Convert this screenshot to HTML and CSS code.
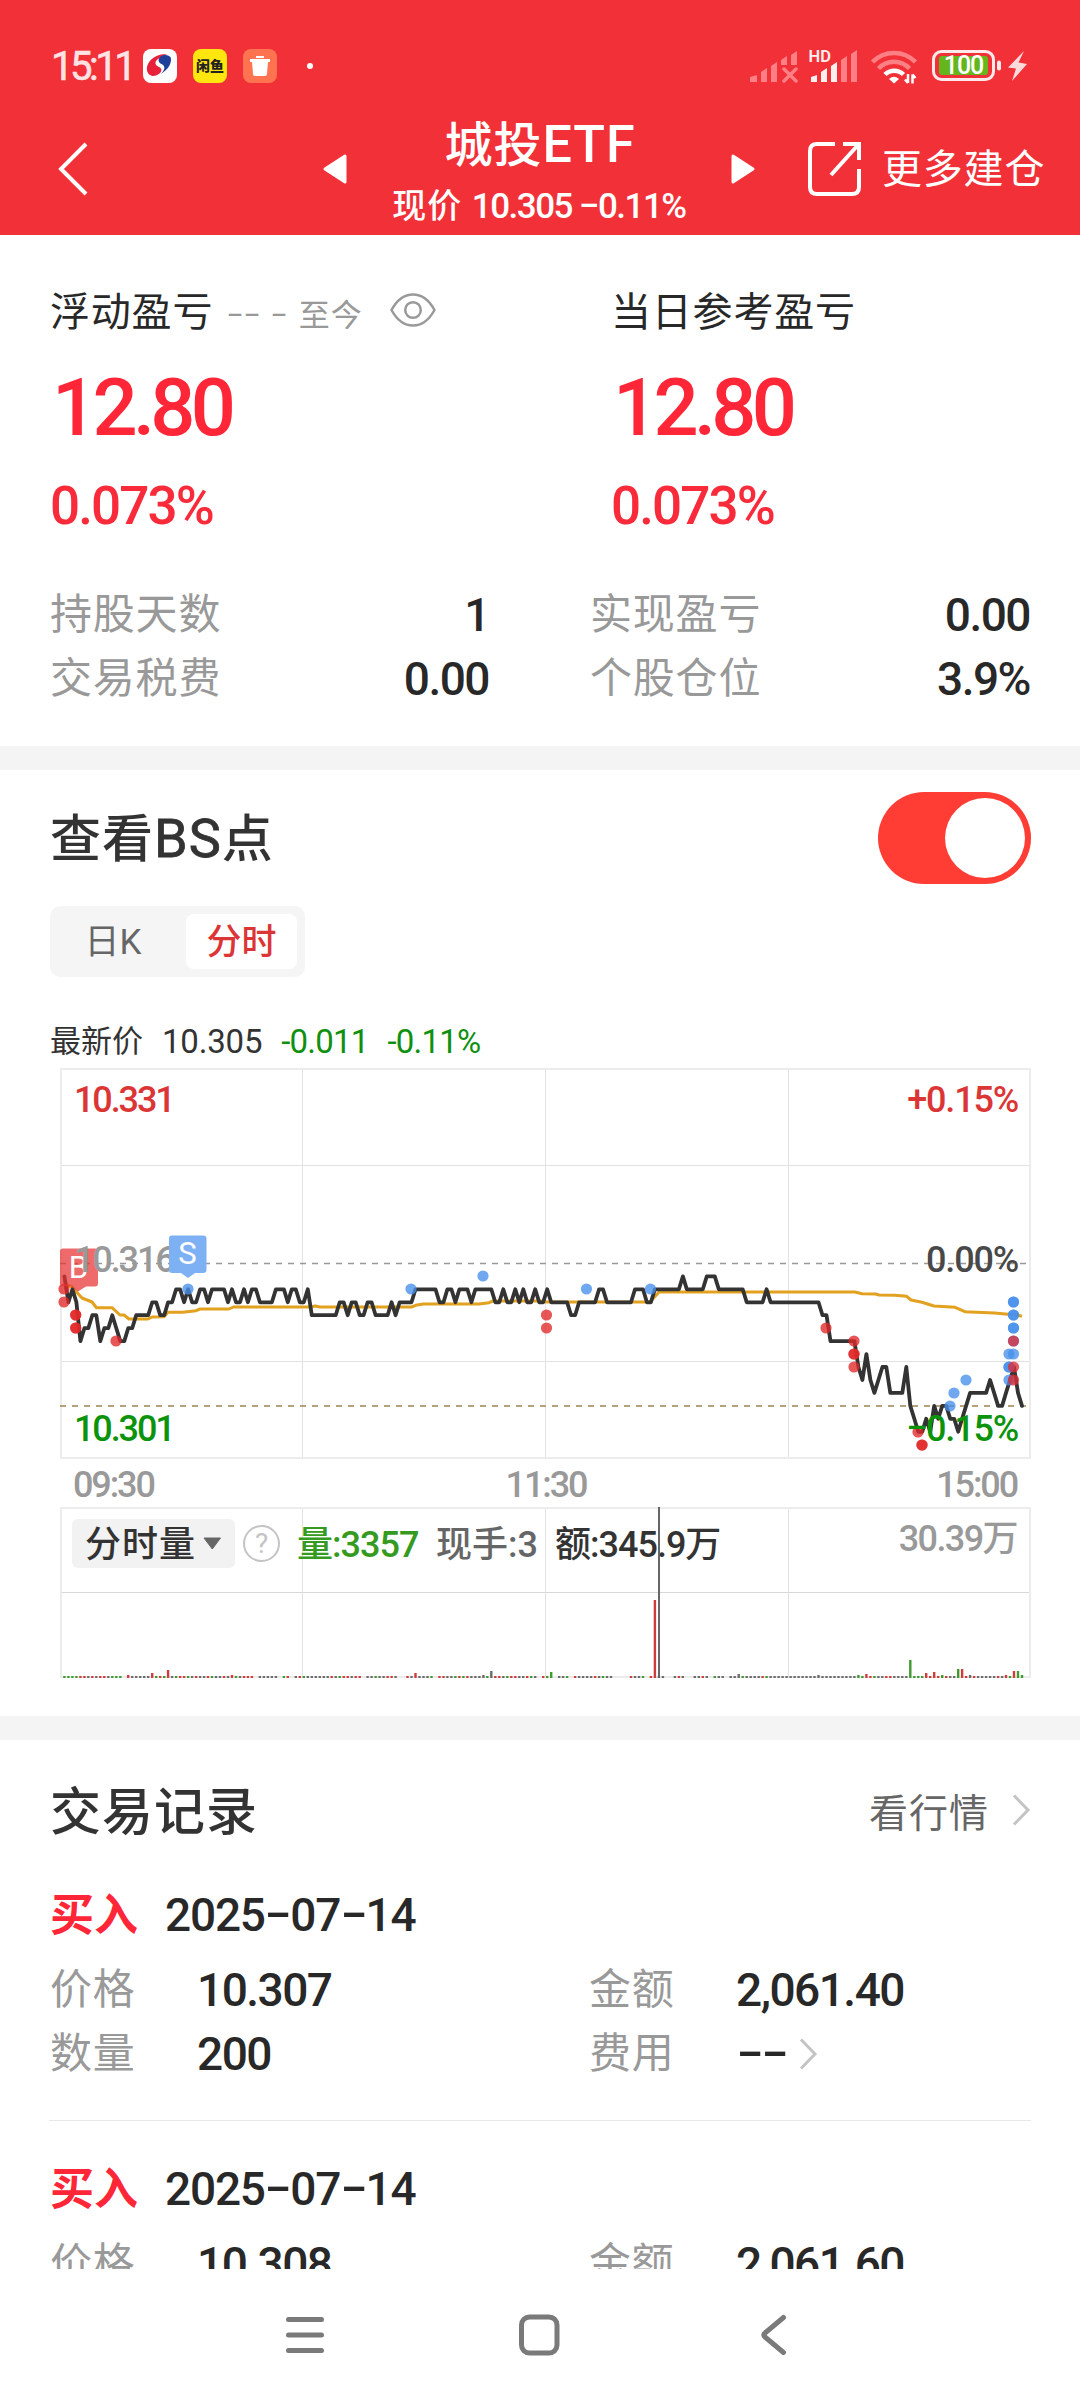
FILE: index.html
```html
<!DOCTYPE html>
<html lang="zh-CN">
<head>
<meta charset="utf-8">
<title>城投ETF</title>
<link rel="stylesheet" href="styles.css">
</head>
<body>
<div class="screen">
  <header class="header">
    <div class="status">
      <span class="clock">15:11</span>
      <svg class="app" width="34" height="34" viewBox="0 0 34 34"><rect width="34" height="34" rx="8" fill="#fff"/><path d="M24 5.500C14 4 3 12 4 21c.5 5 5 7 9 5.500 6-2 7-7 3-8.500-4-1.500-5-5-1-8 3-2.500 6-3.500 9-4.500z" fill="#e8203a"/><path d="M17 8c4-3 8-2 10.500 0 2 5-2 13-10 17 5-4 5-8 1-10-3-1.500-4-4-1.500-7z" fill="#1f3f98"/></svg>
      <svg class="app" width="34" height="34" viewBox="0 0 34 34"><rect width="34" height="34" rx="8" fill="#ffe60f"/><text x="17" y="22" class="fish" text-anchor="middle">闲鱼</text></svg>
      <svg class="app" width="34" height="34" viewBox="0 0 34 34"><rect width="34" height="34" rx="8" fill="#ff7350"/><path d="M7 10h20v3h-2l-1 12q0 2-2 2H12q-2 0-2-2L9 13H7zM13 7h8v2h-8z" fill="#fff"/></svg>
      <i class="dot"></i>
      <span class="grow"></span>
      <svg class="sig" width="48" height="34" viewBox="0 0 48 34" fill="#ff8084"><path d="M0 33v-5l7-2v7zM11 33V23l6-4v14zM21 33V17l6-4v20zM31 16v-5l6-4v9zM41 16V6l6-4v14z"/><path d="M34 20l12 12M46 20L34 32" stroke="#ff8084" stroke-width="3.500" stroke-linecap="round"/></svg>
      <svg class="sig2" width="52" height="34" viewBox="0 0 52 34"><g fill="#fff0f0"><path d="M3 33v-5l6-2v7zM13 33V23l6-4v14zM23 33V17l6-4v20z"/><text x="0.500" y="13" class="hd">HD</text></g><path d="M33 33V11l6-4v26zM43 33V5l6-4v32z" fill="#ff8084"/></svg>
      <svg class="wifi" width="46" height="35" viewBox="0 0 46 35" fill="none" stroke-width="4.500"><path d="M1.500 13a30 30 0 0 1 43 0M7.500 19.500a21 21 0 0 1 31 0" stroke="#ff8084"/><path d="M14 25.500a13 13 0 0 1 18.500 0" stroke="#fff"/><path d="M18 30q5-4.500 10 0l-5 4.500z" fill="#fff"/><path d="M37 25v9M34 30.500l3 3.500M41.500 34.500v-9M44.500 29l-3-3.500" stroke="#fff" stroke-width="2.500"/></svg>
      <svg class="bat" width="70" height="32" viewBox="0 0 70 32"><rect x="1.500" y="1.500" width="60" height="28" rx="8" fill="none" stroke="#ffe9ea" stroke-width="3"/><rect x="7" y="6" width="49" height="19" rx="3" fill="#65b61d"/><rect x="65" y="10.500" width="4" height="10" rx="2" fill="#ffe9ea"/><text x="31.500" y="24.300" text-anchor="middle" class="batnum">100</text></svg>
      <svg class="bolt" width="20" height="30" viewBox="0 0 20 30"><path d="M16 0L0 16.500l8 1L4 30l15-17-8.500-1.500z" fill="#ffdadb"/></svg>
    </div>
    <nav class="nav">
      <svg class="back" width="32" height="54" viewBox="0 0 32 54"><path d="M29 2L4 27l25 25" fill="none" stroke="#fff" stroke-width="4"/></svg>
      <div class="switcher">
        <svg width="24" height="30" viewBox="0 0 24 30"><path d="M22 2v26L2 15z" fill="#fff" stroke="#fff" stroke-width="3" stroke-linejoin="round"/></svg>
        <div class="titles">
          <h1>城投<span>ETF</span></h1>
          <p>现价 <b>10.305 <i class="dash">-</i>0.11%</b></p>
        </div>
        <svg width="24" height="30" viewBox="0 0 24 30"><path d="M2 2v26l20-13z" fill="#fff" stroke="#fff" stroke-width="3" stroke-linejoin="round"/></svg>
      </div>
      <div class="more">
        <svg width="54" height="54" viewBox="0 0 54 54" fill="none" stroke="#fff" stroke-width="4"><path d="M27 2H9Q2 2 2 9v36q0 7 7 7h35q7 0 7-7V27M35 2h16v16M50 3L23 33"/></svg>
        <span>更多建仓</span>
      </div>
    </nav>
  </header>

  <main class="body">
    <section class="summary">
      <div class="duo">
        <div>
          <div class="cap">浮动盈亏<small><i class="dash">-</i><i class="dash">-</i> <i class="dash">-</i> 至今</small>
            <svg width="46" height="34" viewBox="0 0 46 34" fill="none" stroke="#999" stroke-width="2.500"><path d="M1.500 17Q10 1.500 23 1.500T44.500 17Q36 32.500 23 32.500T1.500 17z"/><circle cx="23" cy="17" r="7.800"/></svg>
          </div>
          <div class="big">12.80</div>
          <div class="pct">0.073%</div>
        </div>
        <div>
          <div class="cap">当日参考盈亏</div>
          <div class="big">12.80</div>
          <div class="pct">0.073%</div>
        </div>
      </div>
      <dl class="stats">
        <div><dt>持股天数</dt><dd>1</dd></div>
        <div><dt>实现盈亏</dt><dd>0.00</dd></div>
        <div><dt>交易税费</dt><dd>0.00</dd></div>
        <div><dt>个股仓位</dt><dd>3.9%</dd></div>
      </dl>
    </section>

    <section class="bs">
      <div class="bar"><h2>查看<span>BS</span>点</h2><span class="toggle"><i></i></span></div>
      <div class="tabs"><span>日K</span><span class="on">分时</span></div>
      <div class="quote"><span>最新价</span><span>10.305</span><span class="down">-0.011</span><span class="down">-0.11%</span></div>
      <svg class="chart" width="1080" height="630" viewBox="0 1060 1080 630">
        <g fill="none" stroke="#e2e2e2" stroke-width="1">
          <path d="M302.500 1069v389M545.500 1069v389M788.500 1069v389M61 1165.500h969M61 1361.500h969M302.500 1508v170M545.500 1508v170M788.500 1508v170"/>
          <path d="M61 1592.500h969" stroke="#d8d8d8"/>
          <g stroke="#ececec" stroke-width="2"><rect x="61" y="1069" width="969" height="389"/><path d="M61 1678v-170h969v170M61 1677h969"/></g>
        </g>
        <g fill="none" stroke-dasharray="6 6">
          <path d="M60 1263.500h966" stroke="#999" stroke-width="1.500"/>
          <path d="M60 1406h966" stroke="#b5a27c" stroke-width="2"/>
        </g>
        <polyline class="avg" points="64.400,1284 72,1287 76.500,1292 82,1298 92,1302 96.500,1307.700 112,1307.700 120,1315 124,1315 129,1319 148,1319 152,1317 164,1316.700 168,1312.300 182.500,1312.300 196,1310.700 200,1309 229,1309 233.500,1307 311.600,1307 315,1306 320,1307 411.500,1307 415.600,1305.300 423.500,1304 478.700,1304 489,1302.700 493,1301 540,1301 547,1302 650,1302 659,1292 855,1292 862,1293.700 875.700,1294 879,1295 894.700,1295.300 906.700,1296.300 911,1300 922,1302.300 934,1306 955,1307.300 965,1311.700 994.500,1313 1008,1314.300 1017,1315 1022,1316.300"/>
        <polyline class="price" id="price"/>
        <g id="dots"></g>
        <path d="M63 1248.500h32q3 0 3 3v32q0 3-3 3h-9l-8 5-7-5h-8q-3 0-3-3v-32q0-3 3-3z" class="buy"/>
        <text x="78.500" y="1277.500" class="mark">B</text>
        <g class="axis">
          <g class="left">
            <text x="74" y="1112.300" fill="#dc3535">10.331</text>
            <text x="74" y="1272" fill="#999">10.316</text>
            <text x="74" y="1440.600" fill="#0b930b">10.301</text>
          </g>
          <g text-anchor="end">
            <text x="1018" y="1112.300" fill="#dc3535">+0.15%</text>
            <text x="1018" y="1272" fill="#484848">0.00%</text>
            <text x="1018" y="1440.600" fill="#0b930b">0.15%</text>
          </g>
          <text transform="translate(906.500 1438) scale(1.750 1)" fill="#0b930b">-</text>
          <g fill="#999" class="left">
            <text x="73" y="1497">09:30</text>
            <text x="546" y="1497" text-anchor="middle">11:30</text>
            <text x="1017" y="1497" text-anchor="end">15:00</text>
          </g>
        </g>
        <path d="M172 1235.500h31q3.500 0 3.500 3v31.500q0 3-3.500 3h-8l-7 5-7-5h-9q-3 0-3-3v-31.500q0-3 3-3z" class="sell"/>
        <text x="187.500" y="1264" class="mark">S</text>
        <g id="bars"></g>
        <rect x="72" y="1519" width="163" height="49" rx="6" fill="#f2f2f2"/>
        <g class="legend">
          <text x="85" y="1557" fill="#333" class="name">分时量</text>
          <path d="M204 1538h16.500l-8.200 11z" fill="#666" stroke="#666" stroke-linejoin="round"/>
          <circle cx="261.500" cy="1543.500" r="17.500" fill="none" stroke="#c4c4c4" stroke-width="2"/>
          <text x="261.500" y="1553" text-anchor="middle" class="q">?</text>
          <text x="297" y="1557" fill="#359a20">量:3357</text>
          <text x="436" y="1557" fill="#666" class="hand">现手:3</text>
          <text x="555" y="1557" fill="#333">额:345.9万</text>
          <text x="1017" y="1551" fill="#999" text-anchor="end" class="max">30.39万</text>
        </g>
        <path d="M659 1507v171" stroke="#666" stroke-width="2"/>
      </svg>
    </section>

    <section class="records">
      <div class="bar"><h2>交易记录</h2><a>看行情<svg width="20" height="32" viewBox="0 0 20 32"><path d="M3 1.500L17 16 3 30.500" fill="none" stroke="#c4c4c4" stroke-width="3"/></svg></a></div>
      <article>
        <h3><em>买入</em><time>2025<i class="dash">-</i>07<i class="dash">-</i>14</time></h3>
        <dl>
          <dt>价格</dt><dd>10.307</dd><dt>金额</dt><dd>2,061.40</dd>
          <dt>数量</dt><dd>200</dd><dt>费用</dt><dd><span class="none"><i class="dash">-</i><i class="dash">-</i></span><svg width="20" height="32" viewBox="0 0 20 32"><path d="M3 1.500L17 16 3 30.500" fill="none" stroke="#c4c4c4" stroke-width="3"/></svg></dd>
        </dl>
      </article>
      <article>
        <h3><em>买入</em><time>2025<i class="dash">-</i>07<i class="dash">-</i>14</time></h3>
        <dl><dt>价格</dt><dd>10.308</dd><dt>金额</dt><dd>2,061.60</dd></dl>
      </article>
    </section>
  </main>

  <footer class="keys">
    <svg width="1080" height="130" viewBox="0 2270 1080 130" fill="none" stroke="#7a7a7a" stroke-width="5" stroke-linecap="round"><path d="M288.500 2319.500h33M288.500 2335h33M288.500 2350.500h33"/><rect x="521.500" y="2317" width="35.500" height="36" rx="8"/><path d="M783.500 2317.500L765 2333q-2.500 2 0 4l18.500 15.500"/></svg>
  </footer>
</div>
<script src="chart.js"></script>
</body>
</html>
```
FILE: styles.css
```css
* { box-sizing: border-box; margin: 0; padding: 0; }
body { width: 1080px; background: #fff; font-family: Roboto, "Noto Sans CJK SC", sans-serif; color: #282828; }
svg { display: block; flex: none; }
i, em { font-style: normal; }
.screen { width: 1080px; height: 2400px; display: flex; flex-direction: column; overflow: hidden; }
.dash { display: inline-block; margin: 0 .12em; transform: translateY(-.05em) scaleX(1.7); }

.header { height: 235px; flex: none; background: #f23038; color: #fff; padding-top: 46px; }
.status { display: flex; align-items: center; height: 40px; padding: 0 52px 0 51px; }
.clock { width: 92px; padding-top: 2px; font-size: 40px; line-height: 40px; letter-spacing: -3.500px; color: #ffe3e4; -webkit-text-stroke: .6px #ffe3e4; }
.app { margin-right: 16px; }
.fish { font-size: 14px; font-weight: 900; fill: #222; }
.dot { width: 6px; height: 6px; margin-left: 14px; border-radius: 50%; background: #fff; }
.grow { flex: 1; }
.sig { margin-right: 10px; }
.sig2 { margin-right: 11px; }
.hd { font-size: 16.500px; font-weight: 600; }
.wifi { margin-right: 15px; }
.bat { margin-right: 6px; }
.batnum { font: 500 25px Roboto; letter-spacing: -1px; fill: #fff; }
.nav { display: grid; grid-template-columns: 323px 432px 1fr; height: 149px; }
.back { margin: 56px 0 0 57px; }
.switcher { display: flex; justify-content: space-between; }
.switcher > svg { margin-top: 68px; }
.titles { text-align: center; white-space: nowrap; }
.titles h1 { margin-top: 24px; padding-left: 2px; font-size: 48px; line-height: 70px; font-weight: 500; letter-spacing: 1px; }
.titles h1 span { font-size: 52px; }
.titles p { margin-top: 2px; font-size: 34px; line-height: 46px; font-weight: 500; letter-spacing: 1px; }
.titles b { font-size: 35px; font-weight: 500; letter-spacing: -1.500px; }
.more { display: flex; align-items: center; height: 54px; margin: 56px 0 0 53px; font-size: 40px; line-height: 52px; letter-spacing: .8px; }
.more span { margin-left: 20px; height: 51px; }

.body { height: 2034px; flex: none; overflow: hidden; }
.summary { height: 511px; padding: 48px 50px 0; }
.duo { display: grid; grid-template-columns: 561px 1fr; }
.cap { display: flex; align-items: center; height: 52px; font-size: 40px; letter-spacing: .8px; }
.cap small { margin: 6px 27px 0 14px; font-size: 31px; color: #999; letter-spacing: 1px; word-spacing: 1.500px; }
.cap svg { margin-top: 2px; }
.big { margin-top: 33px; font-size: 79.500px; line-height: 80px; font-weight: 500; letter-spacing: -4.700px; color: #ff2638; padding-left: 2px; }
.pct { margin-top: 28px; font-size: 53px; line-height: 60px; font-weight: 500; letter-spacing: -1.900px; color: #f92a3a; }
.stats { display: grid; grid-template-columns: 439px 440px; column-gap: 101px; margin-top: 47px; line-height: 64px; }
.stats div { display: flex; justify-content: space-between; }
dt { font-size: 42px; letter-spacing: .8px; color: #999; }
dd { font-size: 46px; font-weight: 500; letter-spacing: -1.500px; }
.stats dt { height: 64px; }

.bs { height: 970px; border-top: 24px solid #f4f4f4; }
.bar { display: flex; align-items: center; justify-content: space-between; padding: 0 50px; }
.bs .bar { height: 136px; }
h2 { height: 76px; line-height: 78px; font-size: 51px; font-weight: 500; letter-spacing: 1px; color: #333; }
.records h2 { line-height: 77px; }
h2 span { font-size: 54px; font-weight: 400; -webkit-text-stroke: .8px #333; }
.toggle { width: 153px; height: 92px; margin-right: -1px; padding: 6px; border-radius: 46px; background: #ff3d34; display: flex; justify-content: flex-end; }
.toggle i { width: 80px; height: 80px; border-radius: 50%; background: #fff; }
.tabs { display: flex; width: 255px; height: 71px; margin-left: 50px; padding: 8px; border-radius: 10px; background: #f5f5f5; font-size: 35px; line-height: 57px; text-align: center; color: #666; }
.tabs span { width: 128px; padding-right: 18px; }
.tabs .on { width: 111px; height: 55px; padding: 0; border-radius: 8px; background: #fff; font-weight: 500; color: #dc3535; }
.quote { display: flex; gap: 19px; margin: 40px 0 0 50px; height: 49px; font-size: 33px; line-height: 50px; color: #333; }
.quote span:first-child { font-size: 31px; }
.quote span:nth-child(2) { letter-spacing: -.2px; }
.quote .down { color: #109010; letter-spacing: -.8px; }
.chart { margin-top: -6px; }
.avg { fill: none; stroke: #e2a11e; stroke-width: 3; stroke-linejoin: round; }
.price { fill: none; stroke: #333; stroke-width: 3.800; stroke-linejoin: round; stroke-linecap: round; }
.buy { fill: #e93232; fill-opacity: .72; }
.sell { fill: #7eb1f3; }
.mark { font-size: 31px; fill: #fff; text-anchor: middle; }
.axis { font-size: 36px; font-weight: 500; letter-spacing: -1.200px; }
.axis .left { letter-spacing: -2.100px; }
.legend { font-size: 36px; font-weight: 500; letter-spacing: -1px; }
.legend .name { letter-spacing: 1px; }
.legend .hand { letter-spacing: 0; }
.legend .max { letter-spacing: -1.600px; }
.legend .q { font-size: 28px; font-weight: 400; fill: #c4c4c4; letter-spacing: 0; }

.records { height: 560px; border-top: 24px solid #f4f4f4; }
.records .bar { height: 143px; }
.records .bar a { display: flex; align-items: center; gap: 22px; height: 60px; margin: -4px -1px 0 0; font-size: 39px; letter-spacing: 1px; color: #666; }
article { height: 237px; margin: 0 49px; padding: 0 1px; }
article + article { border-top: 1px solid #e8e8e8; }
h3 { display: flex; height: 66px; line-height: 66px; align-items: center; font-weight: 500; }
article + article h3 { margin-top: 36px; }
h3 em { width: 115px; font-size: 44px; font-weight: 700; color: #ff2638; }
h3 time { height: 68px; font-size: 46px; letter-spacing: -1.200px; }
article dl { display: grid; grid-template-columns: 147px 392px 147px 1fr; margin-top: 9px; line-height: 64px; }
article dd { display: flex; align-items: center; }
article dd svg { margin-left: 12px; }
.keys { height: 131px; padding-top: 1px; background: #fff; }
```
FILE: chart.js
```js
const SVG = 'http://www.w3.org/2000/svg';
const minuteX = i => 64.4 + 3.99 * i;
const levelY = n => 1263.4 + 12.95 * n;

function add(parent, tag, attrs) {
  const el = document.createElementNS(SVG, tag);
  for (const k in attrs) el.setAttribute(k, attrs[k]);
  parent.appendChild(el);
}

// Price ticks below the previous close, as [first minute, ticks...] runs.
const runs = [[0,1],[1,3],[2,2],[3,3],[4,6],[5,5,5,4,4,6,5,5,4,5,6,6,5,5,4,4,4,4,3,3,4,4,3,3,2,2,3,2,3,3,2,2,3,2,2,2,2,3,2,3,3,2,3,2,2,3,3,3,3,2,2,2,3,2,2,3,3,2,4,4,4,4,4,4,4,3,3,4,3,3,4,4,3,3,4,4,4,4,3,4,3,3,3,3,2,2,2,2,2,2,3,3,2,2,3,2,2,2,3,2,2,2,2,2,3,3,2,3,3,2,3,2,3,3,2,3,3,2],
  [122,3],[126,3],[127,4,4,3],[133,3],[134,2,2,3],[142,3],[143,2,2,2,3,3,2],[154,2],[155,1,2],[160,2],[161,1,1,1,2],[170,2],[171,3],[175,3],[176,2,3],[189,3],[190,4,4,6],[198,6],[199,8,9,7,9,10,9,8,8,10],[210,10],[211,8,11,12,13,13,12,13,11,12,11,11,12,12,13,12,11,10],[231,10],[232,9,10,11,11,10,9,8,10,11]];
const points = [];
for (const [start, ...ticks] of runs)
  ticks.forEach((t, k) => points.push(minuteX(start + k).toFixed(1) + ',' + levelY(t).toFixed(1)));
document.getElementById('price').setAttribute('points', points.join(' '));

const dots = {
  '#e02828': [[64,1289],[64,1302],[75.7,1315],[75.7,1315],[75.7,1328],[75.7,1328],[116,1341],[546.5,1315],[546.5,1328],[826,1328],[854,1341],[854,1354],[854,1354],[854,1367],[918,1432],[922,1445],[922,1445]],
  '#4690eb': [[188,1289],[411,1289],[483,1276],[586.5,1289],[650.5,1289],[950,1406],[954,1393],[966,1380],[1013.5,1302],[1013.5,1302],[1013.5,1315],[1013.5,1315],[1013.5,1328],[1013.5,1328],[1013.5,1341],[1013.5,1354],[1009,1354],[1009,1367],[1009,1367],[1009,1380]],
  '#de2c34': [[1013.5,1341],[1013.5,1367],[1013.5,1380]]
};
for (const color in dots)
  for (const [cx, cy] of dots[color])
    add(document.getElementById('dots'), 'circle', { cx, cy, r: 5.6, fill: color, 'fill-opacity': .78 });

// One letter per minute: r rise, g fall, k flat, . no trade.
const volume =
  'ggggrrkrkrrkggg.rkkkkkrgrgrkgrrgkrkkrgkkrkrgkrrr.kkkkk.gr.krgkkkkkkrkgrrkrr.kkgkkrrk..rkkkkkg.rrkkgrgrkkkkg.rrkgrrkkrg' +
  'k.rgk.kkg.rkkkkrkgkk....rkkg.rkkk..krk..kkrk.gkk.kkkgkkkkrgkkkkkkkkkkkkgkkkkkkkkkggkrgkkrrkkkkrggggrkrgrkkgrrkrkkkkkrkggkrrrggg';
const tall = {16:3,22:5,26:8,42:3,88:5,105:3,107:7,122:6,148:78,169:4,189:3,199:3,201:4,212:18,216:5,218:6,220:3,224:9,225:9,227:3,236:3,238:7,239:7,240:3};
const forced = {22:'r',26:'r',42:'r',88:'r',105:'k',107:'k',122:'g',148:'r',169:'k',189:'k',199:'g',201:'r',212:'g',213:'g',216:'r',218:'r',224:'g',225:'r',236:'r',238:'r',239:'g',240:'g'};
const colors = { r: '#cf3c3c', g: '#3f9a30', k: '#6c6c6c' };
for (let i = 0; i <= 240; i++) {
  const c = forced[i] || volume[i];
  if (!colors[c]) continue;
  const h = tall[i] || 2;
  add(document.getElementById('bars'), 'rect', { x: (minuteX(i) - 1.2).toFixed(1), y: 1678 - h, width: 2.4, height: h, fill: colors[c] });
}
```
